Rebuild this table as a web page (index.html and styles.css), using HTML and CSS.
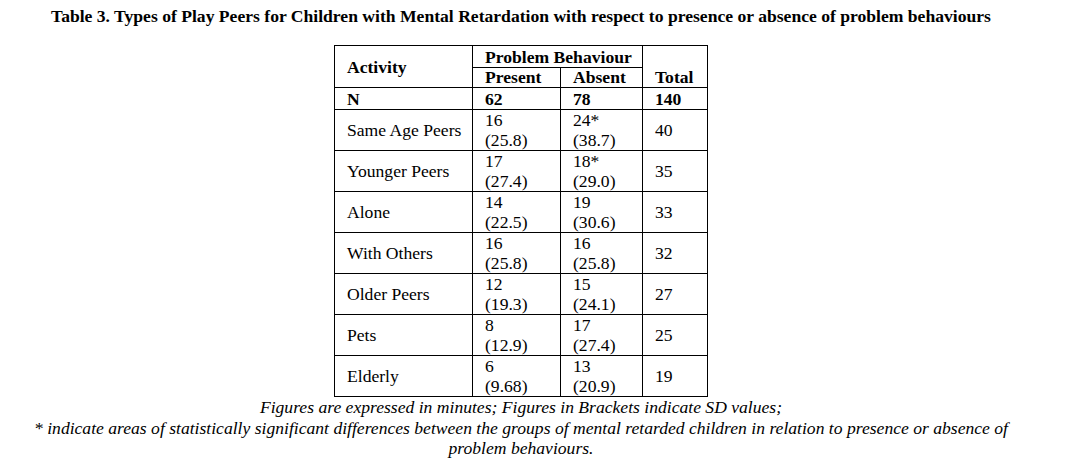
FILE: index.html
```html
<!DOCTYPE html>
<html>
<head>
<meta charset="utf-8">
<link rel="stylesheet" href="styles.css">
</head>
<body>
<div class="page">
  <h1 class="title">Table 3. Types of Play Peers for Children with Mental Retardation with respect to presence or absence of problem behaviours</h1>
  <table class="data">
    <colgroup>
      <col class="c-act"><col class="c-pre"><col class="c-abs"><col class="c-tot">
    </colgroup>
    <thead>
      <tr class="h1">
        <th rowspan="2" class="mid">Activity</th>
        <th colspan="2">Problem Behaviour</th>
        <th rowspan="2" class="bot">Total</th>
      </tr>
      <tr class="h2">
        <th>Present</th>
        <th>Absent</th>
      </tr>
      <tr class="nrow">
        <th>N</th><th>62</th><th>78</th><th>140</th>
      </tr>
    </thead>
    <tbody>
      <tr><td>Same Age Peers</td><td>16<br>(25.8)</td><td>24*<br>(38.7)</td><td>40</td></tr>
      <tr><td>Younger Peers</td><td>17<br>(27.4)</td><td>18*<br>(29.0)</td><td>35</td></tr>
      <tr><td>Alone</td><td>14<br>(22.5)</td><td>19<br>(30.6)</td><td>33</td></tr>
      <tr><td>With Others</td><td>16<br>(25.8)</td><td>16<br>(25.8)</td><td>32</td></tr>
      <tr><td>Older Peers</td><td>12<br>(19.3)</td><td>15<br>(24.1)</td><td>27</td></tr>
      <tr><td>Pets</td><td>8<br>(12.9)</td><td>17<br>(27.4)</td><td>25</td></tr>
      <tr><td>Elderly</td><td>6<br>(9.68)</td><td>13<br>(20.9)</td><td>19</td></tr>
    </tbody>
  </table>
  <p class="note">Figures are expressed in minutes; Figures in Brackets indicate SD values;<br>* indicate areas of statistically significant differences between the groups of mental retarded children in relation to presence or absence of problem behaviours.</p>
</div>
</body>
</html>
```
FILE: styles.css
```css
html, body {
  margin: 0;
  padding: 0;
  background: #fff;
  color: #000;
}
.page {
  width: 1026px;
  margin-left: 8px;
  font-family: "Liberation Serif", "Times New Roman", serif;
}
.title {
  margin: 0;
  padding-top: 6px;
  text-align: center;
  font-size: 17.6px;
  font-weight: bold;
  line-height: 20px;
}
.data {
  margin: 19px auto 0;
  border-collapse: collapse;
  table-layout: fixed;
  width: 373px;
  font-size: 17.6px;
}
.c-act { width: 138px; }
.c-pre { width: 88px; }
.c-abs { width: 82px; }
.c-tot { width: 65px; }
.data th, .data td {
  border: 1px solid #000;
  padding: 0 0 0 12px;
  text-align: left;
  vertical-align: middle;
  line-height: 20px;
}
.data th { font-weight: bold; }
.data .bot { vertical-align: bottom; }
.data .h1 th { height: 21px; }
.data .h2 th { height: 19px; line-height: 19px; }
.data .nrow th { height: 21px; }
.data td { height: 40px; }
.note {
  margin: 0;
  text-align: center;
  font-style: italic;
  font-size: 17.6px;
  line-height: 20.5px;
}
```
